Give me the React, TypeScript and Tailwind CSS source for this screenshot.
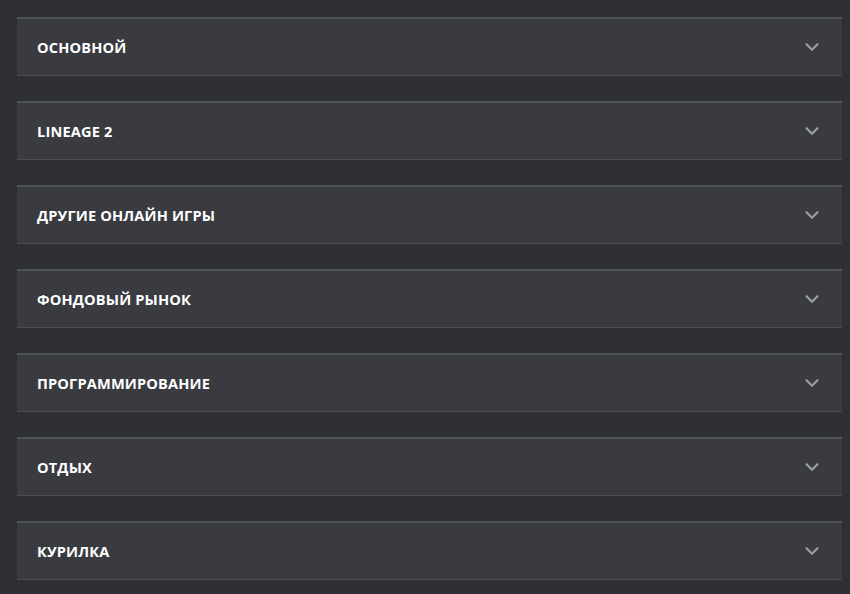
import { ChevronDown } from 'lucide-react'

const sections = [
  'Основной',
  'Lineage 2',
  'Другие онлайн игры',
  'Фондовый рынок',
  'Программирование',
  'Отдых',
  'Курилка',
]

const SectionRow = ({ title }: { title: string }) => (
  <div className="flex h-[59px] items-center justify-between border-t-2 border-b border-t-[#50535a] border-b-[#4b4e55] bg-[#393b41] pt-[2px] pl-5 pr-[19px]">
    <span className="text-[14.6px] font-bold uppercase tracking-[0.15px] text-white">{title}</span>
    <ChevronDown className="-mt-[3px] h-[22px] w-[22px] text-[#9a9da4]" strokeWidth={2.4} />
  </div>
)

export default function App() {
  return (
    <div
      className="min-h-[594px] bg-[#2e3036] pt-[17px] pl-[17px] pr-[8px]"
      style={{ fontFamily: '"Open Sans", "Noto Sans", sans-serif' }}
    >
      <div className="flex flex-col gap-[25px]">
        {sections.map((s) => (
          <SectionRow key={s} title={s} />
        ))}
      </div>
    </div>
  )
}
